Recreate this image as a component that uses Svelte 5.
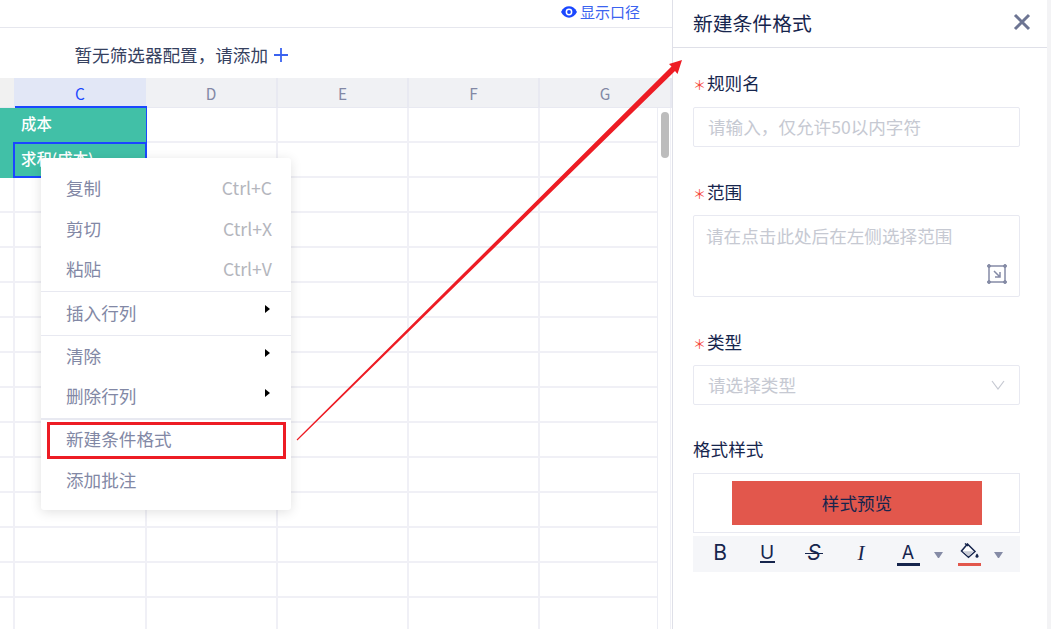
<script>
  const columns = ['C', 'D', 'E', 'F', 'G'];
  const rows = Array.from({ length: 15 }, (_, i) => i);

  const menuGroups = [
    [
      { label: '复制', key: 'Ctrl+C' },
      { label: '剪切', key: 'Ctrl+X', down: true },
      { label: '粘贴', key: 'Ctrl+V', down: true }
    ],
    [{ label: '插入行列', sub: true }],
    [
      { label: '清除', sub: true },
      { label: '删除行列', sub: true }
    ],
    [{ label: '新建条件格式', marked: true, up: true }, { label: '添加批注' }]
  ];
</script>

<div class="page">
  <div class="sheet">
    <div class="topbar">
      <span class="caliber">
        <svg width="16" height="12" viewBox="0 0 16 12">
          <path d="M0 6C2 2 5 0.300 8 0.300S14 2 16 6c-2 4-5 5.700-8 5.700S2 10 0 6z" fill="#1a47ff" />
          <circle cx="8" cy="6" r="3.400" fill="#fff" />
          <circle cx="8" cy="6" r="1.900" fill="#1a47ff" />
        </svg>
        显示口径
      </span>
    </div>

    <div class="filters">
      暂无筛选器配置，请添加
      <svg width="16" height="16" viewBox="0 0 16 16">
        <path d="M8 1v14M1 8h14" stroke="#3b63f0" stroke-width="1.800" fill="none" />
      </svg>
    </div>

    <div class="table">
      <div class="head">
        <div class="corner"></div>
        {#each columns as col, i}
          <div class="col-name" class:active={i === 0}>{col}</div>
        {/each}
      </div>
      {#each rows as row}
        <div class="row">
          <div class="index" class:teal={row < 2}></div>
          {#each columns as col, i}
            <div class="cell" class:teal={i === 0 && row < 2} class:title-cell={i === 0 && row === 0} class:selected={i === 0 && row === 1}>
              {#if i === 0 && row === 0}成本{/if}
              {#if i === 0 && row === 1}求和(成本){/if}
            </div>
          {/each}
        </div>
      {/each}
      <div class="scrollbar"><div class="thumb"></div></div>
    </div>

    <div class="menu">
      {#each menuGroups as group}
        <div class="menu-group">
          {#each group as item}
            <div class="menu-item" class:marked={item.marked} class:up={item.up} class:down={item.down}>
              <span>{item.label}</span>
              {#if item.key}<span class="shortcut">{item.key}</span>{/if}
              {#if item.sub}<span class="caret"></span>{/if}
            </div>
          {/each}
        </div>
      {/each}
    </div>
  </div>

  <aside class="panel">
    <header class="panel-head">
      <span>新建条件格式</span>
      <svg width="18" height="18" viewBox="0 0 18 18">
        <path d="M2 2l14 14M16 2L2 16" stroke="#6d7593" stroke-width="3" fill="none" />
      </svg>
    </header>

    <div class="form">
      <label class="label name-label"><i>＊</i>规则名</label>
      <div class="input">请输入，仅允许50以内字符</div>

      <label class="label range-label"><i>＊</i>范围</label>
      <div class="input area">
        请在点击此处后在左侧选择范围
        <svg class="range-icon" width="20" height="20" viewBox="0 0 20 20" fill="none" stroke="#858ba6">
          <rect x="2" y="2" width="16" height="16" stroke-width="1.500" />
          <circle cx="2" cy="2" r="1.500" fill="#858ba6" />
          <circle cx="18" cy="2" r="1.500" fill="#858ba6" />
          <circle cx="2" cy="18" r="1.500" fill="#858ba6" />
          <circle cx="18" cy="18" r="1.500" fill="#858ba6" />
          <path d="M7 7l6 6M13 8V13H8" stroke-width="1.500" />
        </svg>
      </div>

      <label class="label type-label"><i>＊</i>类型</label>
      <div class="input select">
        请选择类型
        <svg width="14" height="10" viewBox="0 0 14 10">
          <path d="M1 1l6 8 6-8" stroke="#c6c9d2" stroke-width="1.200" fill="none" />
        </svg>
      </div>

      <div class="label style-label">格式样式</div>
      <div class="preview"><div class="swatch">样式预览</div></div>
      <div class="toolbar">
        <span class="tool bold">B</span>
        <span class="tool under">U</span>
        <span class="tool strike">S</span>
        <span class="tool slant">I</span>
        <span class="tool color">A<b></b></span>
        <span class="drop"></span>
        <span class="tool fill">
          <svg width="20" height="16" viewBox="0 0 20 16">
            <path d="M8.500 1L16 8.500l-6.500 5.700-7-6.200z" fill="#fff" stroke="#16254d" stroke-width="1.500" />
            <path d="M3.500 8.200h11.800L9.500 13.200z" fill="#c9ccd6" />
            <path d="M6 0.500l3 2.500" stroke="#16254d" stroke-width="1.500" />
            <path d="M18 10.500c1 1.300 1.500 2 1.500 2.800a1.500 1.500 0 0 1-3 0c0-.8.500-1.500 1.500-2.800z" fill="#16254d" />
          </svg>
          <b></b>
        </span>
        <span class="drop"></span>
      </div>
    </div>
  </aside>
  <div class="edge"></div>

  <svg class="arrow" width="1051" height="629" viewBox="0 0 1051 629">
    <polygon points="296.600,439.600 671.500,66.500 669,64 682,60 677.500,74 675,71 297.400,440.400" fill="#ed1c24" />
  </svg>
</div>

<style>
  :global(body) {
    margin: 0;
    background: #fff;
  }

  .page {
    position: relative;
    display: flex;
    width: 1051px;
    height: 629px;
    overflow: hidden;
    font-family: "Noto Sans CJK SC", "Noto Sans", sans-serif;
    color: #16254d;
  }

  .sheet {
    position: relative;
    flex: 0 0 672px;
    display: flex;
    flex-direction: column;
    min-width: 0;
  }

  .topbar {
    height: 27px;
    flex: none;
    display: flex;
    justify-content: flex-end;
    align-items: center;
    padding-right: 32px;
    border-bottom: 1px solid #e6e7ee;
  }

  .caliber {
    display: flex;
    align-items: center;
    gap: 3px;
    font-size: 15px;
    line-height: 20px;
    color: #3b63f0;
    margin-top: -4px;
  }

  .filters {
    height: 50px;
    flex: none;
    display: flex;
    align-items: center;
    gap: 5px;
    padding: 3px 0 0 74.500px;
    box-sizing: border-box;
    font-size: 17.600px;
    color: #36415f;
  }

  .table {
    position: relative;
    flex: 1;
    overflow: hidden;
  }

  .head {
    display: grid;
    grid-template-columns: 14px 132px 132px 131px 131px 132px;
    height: 29px;
    background: #f0f1f4;
    border-bottom: 1px solid #e8e9f1;
    width: 672px;
  }

  .row {
    display: grid;
    grid-template-columns: 15px 132px 131px 131px 131px 131px;
    height: 35px;
    width: 671px;
  }

  .corner {
    background: #f1f1f1;
  }

  .col-name {
    display: flex;
    align-items: center;
    justify-content: center;
    font-size: 15.400px;
    color: #8288a5;
    border-right: 2px solid #e8e9f1;
    box-sizing: border-box;
  }

  .col-name.active {
    background: #e2e7f6;
    color: #1a47ff;
    border-right: none;
  }

  .index,
  .cell {
    box-sizing: border-box;
    border-right: 2px solid #f0f0f6;
    border-bottom: 2px solid #f0f0f6;
  }

  .index.teal,
  .cell.teal {
    background: #41c0a7;
    border-color: #41c0a7;
    color: #fff;
    font-size: 15.400px;
    font-weight: 500;
    line-height: 30px;
    padding-left: 6px;
    white-space: nowrap;
    overflow: hidden;
  }

  .cell.title-cell {
    border-top: 2px solid #1a47ff;
    border-right: 1px solid #1a47ff;
    border-bottom: none;
    margin-top: -2px;
    height: 36px;
  }

  .cell.selected {
    border: 2px solid #1a47ff;
    margin: -1px 0 0 -2px;
    padding-left: 6px;
    line-height: 29px;
  }

  .scrollbar {
    position: absolute;
    top: 30px;
    bottom: 0;
    left: 657px;
    width: 13px;
    background: #fff;
    border-left: 1px solid #ecedf4;
    box-sizing: border-box;
  }

  .thumb {
    width: 8px;
    height: 46px;
    margin: 4px 0 0 3px;
    border-radius: 4px;
    background: #bcbcbc;
  }

  .menu {
    position: absolute;
    left: 41px;
    top: 158px;
    width: 250px;
    height: 352px;
    background: #fff;
    border-radius: 3px;
    box-shadow: 0 2px 12px rgba(0, 0, 0, 0.12);
    font-size: 17.600px;
    color: #8288a5;
  }

  .menu-group {
    border-bottom: 1px solid #e8e9f1;
    padding: 11px 0 2px;
  }

  .menu-group:nth-child(2) {
    padding: 1px 0 0;
  }

  .menu-group:nth-child(3) {
    padding: 1px 0;
    border-bottom-width: 2px;
  }

  .menu-group:last-child {
    border-bottom: none;
    padding: 1px 0 0;
  }

  .menu-item {
    position: relative;
    display: flex;
    justify-content: space-between;
    align-items: center;
    height: 40px;
    box-sizing: border-box;
    padding: 0 19px 4px 25px;
  }

  .menu-item.up {
    padding-bottom: 5px;
  }

  .menu-item.down {
    padding-bottom: 2px;
  }

  .menu-group:nth-child(2) .menu-item {
    height: 42px;
  }

  .shortcut {
    color: #b4b6bd;
  }

  .caret {
    position: absolute;
    right: 21px;
    top: 12px;
    border-left: 5px solid #000;
    border-top: 4.500px solid transparent;
    border-bottom: 4.500px solid transparent;
  }

  .menu-item.marked::after {
    content: '';
    position: absolute;
    left: 6px;
    right: 5px;
    top: 1px;
    height: 37px;
    box-sizing: border-box;
    border: 3px solid #ed1c24;
  }

  .panel {
    flex: 0 0 375px;
    box-sizing: border-box;
    border-left: 1px solid #dfe0e8;
  }

  .panel-head {
    height: 48px;
    box-sizing: border-box;
    border-bottom: 1px solid #dfe0e8;
    display: flex;
    align-items: center;
    justify-content: space-between;
    padding: 0 16px 3px 20px;
    font-size: 19.800px;
    color: #16254d;
  }

  .form {
    padding: 0 27px 0 20px;
  }

  .label {
    display: block;
    font-size: 17.600px;
    line-height: 24px;
    color: #16254d;
  }

  .label i {
    font-style: normal;
    font-size: 13px;
    color: #f5483b;
    margin-right: 1px;
    vertical-align: 0;
    line-height: 0;
  }

  .name-label {
    margin-top: 23px;
    margin-bottom: 12px;
  }

  .range-label {
    margin-top: 33px;
    margin-bottom: 11px;
  }

  .type-label {
    margin-top: 33px;
    margin-bottom: 11px;
  }

  .style-label {
    margin-top: 32px;
    margin-bottom: 12px;
  }

  .input {
    position: relative;
    height: 40px;
    box-sizing: border-box;
    border: 1px solid #e8e9f1;
    border-radius: 2px;
    padding-left: 14px;
    font-size: 17.600px;
    line-height: 38px;
    color: #c6c9d2;
  }

  .area {
    height: 82px;
    padding-left: 12px;
    line-height: 40px;
  }

  .range-icon {
    position: absolute;
    right: 12px;
    bottom: 12px;
  }

  .select {
    display: flex;
    align-items: center;
    justify-content: space-between;
    padding-right: 14px;
  }

  .preview {
    height: 60px;
    box-sizing: border-box;
    border: 1px solid #e8e9f1;
    padding: 7px 37px 0 38px;
  }

  .swatch {
    height: 44px;
    background: #e2574c;
    text-align: center;
    font-size: 17.600px;
    line-height: 44px;
    color: #16254d;
  }

  .toolbar {
    display: flex;
    align-items: center;
    height: 36px;
    margin-top: 3px;
    padding-left: 3.500px;
    background: #f5f6f9;
  }

  .tool {
    position: relative;
    flex: 0 0 47px;
    height: 36px;
    text-align: center;
    font-family: "Inter", sans-serif;
    font-size: 21px;
    line-height: 34px;
    color: #16254d;
  }

  .under {
    font-size: 19px;
  }

  .under::after {
    content: '';
    position: absolute;
    left: 16px;
    width: 15px;
    top: 25px;
    height: 1.500px;
    background: #16254d;
  }

  .strike {
    font-style: italic;
  }

  .strike::after {
    content: '';
    position: absolute;
    left: 14px;
    width: 18px;
    top: 16.500px;
    height: 1.500px;
    background: #16254d;
  }

  .slant {
    font-family: "Liberation Serif", serif;
    font-style: italic;
  }

  .color {
    font-size: 18px;
  }

  .color b,
  .fill b {
    position: absolute;
    left: 12px;
    width: 23px;
    top: 27px;
    height: 3px;
    background: #16254d;
  }

  .fill {
    flex-basis: 46px;
  }

  .fill svg {
    position: absolute;
    left: 13px;
    top: 7px;
  }

  .fill b {
    background: #e2574c;
  }

  .drop {
    flex: 0 0 9px;
    box-sizing: border-box;
    height: 0;
    border-left: 4.500px solid transparent;
    border-right: 4.500px solid transparent;
    border-top: 6px solid #858ba6;
    margin: 2px 2.500px 0;
  }

  .edge {
    flex: 1;
    background: #f3f3f5;
  }

  .arrow {
    position: absolute;
    inset: 0;
    pointer-events: none;
  }
</style>
